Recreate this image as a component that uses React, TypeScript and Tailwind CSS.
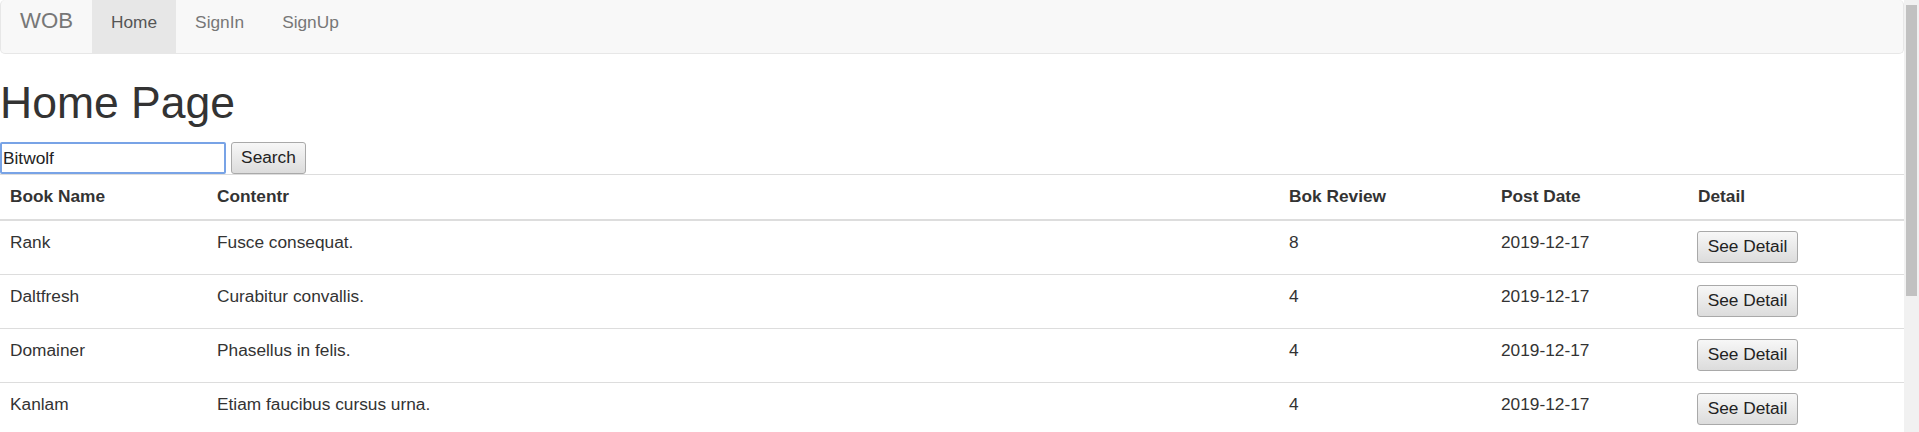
const books = [
  { name: "Rank", content: "Fusce consequat.", review: 8, date: "2019-12-17" },
  { name: "Daltfresh", content: "Curabitur convallis.", review: 4, date: "2019-12-17" },
  { name: "Domainer", content: "Phasellus in felis.", review: 4, date: "2019-12-17" },
  { name: "Kanlam", content: "Etiam faucibus cursus urna.", review: 4, date: "2019-12-17" },
];

const cols = "grid grid-cols-[207px_1072px_212px_197px_216px]";

function OldButton({ label, className }: { label: string; className: string }) {
  return (
    <button
      type="button"
      className={
        "h-[32px] rounded-[3px] border border-[#a9a9a9] bg-gradient-to-b from-[#f7f7f7] to-[#dcdcdc] text-[17.3px] leading-none text-[#222] " +
        className
      }
    >
      {label}
    </button>
  );
}

export default function App() {
  return (
    <div className="flex h-[432px] overflow-hidden bg-white font-['Liberation_Sans',Arial,sans-serif] text-[17.3px] leading-[24.7px] text-[#333]">
      <div className="flex w-[1904px] flex-none flex-col">
        {/* Navbar */}
        <nav className="flex h-[54px] flex-none rounded-[5px] border border-t-0 border-[#e7e7e7] bg-[#f8f8f8]">
          <a className="w-[91px] pl-[19px] pt-[9px] text-[22.2px] leading-[24.7px] text-[#777]">WOB</a>
          <a className="h-full bg-[#e7e7e7] px-[19px] pt-[10px] text-[#555]">Home</a>
          <a className="h-full px-[19px] pt-[10px] text-[#777]">SignIn</a>
          <a className="h-full px-[19px] pt-[10px] text-[#777]">SignUp</a>
        </nav>

        {/* Title + search */}
        <h1 className="mt-[23.5px] text-[44.5px] leading-[49px] font-normal">Home Page</h1>
        <div className="mt-[15.5px] flex h-[32px] gap-[5px]">
          <input
            defaultValue="Bitwolf"
            className="h-[32px] w-[226px] rounded-[2px] border-2 border-[#78a3e6] pl-[1px] text-[17.3px] text-[#222] outline-none"
          />
          <OldButton label="Search" className="w-[75px]" />
        </div>

        {/* Table */}
        <div className="border-t border-[#ddd]">
          <div className={cols + " h-[46px] border-b-2 border-[#ddd] font-bold"}>
            <div className="px-[10px] pt-[9px]">Book Name</div>
            <div className="px-[10px] pt-[9px]">Contentr</div>
            <div className="px-[10px] pt-[9px]">Bok Review</div>
            <div className="px-[10px] pt-[9px]">Post Date</div>
            <div className="px-[10px] pt-[9px]">Detail</div>
          </div>
          {books.map((b) => (
            <div key={b.name} className={cols + " h-[54px] border-b border-[#ddd]"}>
              <div className="px-[10px] pt-[9px]">{b.name}</div>
              <div className="px-[10px] pt-[9px]">{b.content}</div>
              <div className="px-[10px] pt-[9px]">{b.review}</div>
              <div className="px-[10px] pt-[9px]">{b.date}</div>
              <div className="px-[9px] pt-[10px]">
                <OldButton label="See Detail" className="w-[101px]" />
              </div>
            </div>
          ))}
        </div>
      </div>

      {/* Scrollbar */}
      <div className="flex w-[15px] flex-none flex-col bg-[#f1f1f1] pl-[2px] pr-[2px] pt-[5px]">
        <div className="h-[291px] bg-[#c1c1c1]" />
      </div>
    </div>
  );
}
